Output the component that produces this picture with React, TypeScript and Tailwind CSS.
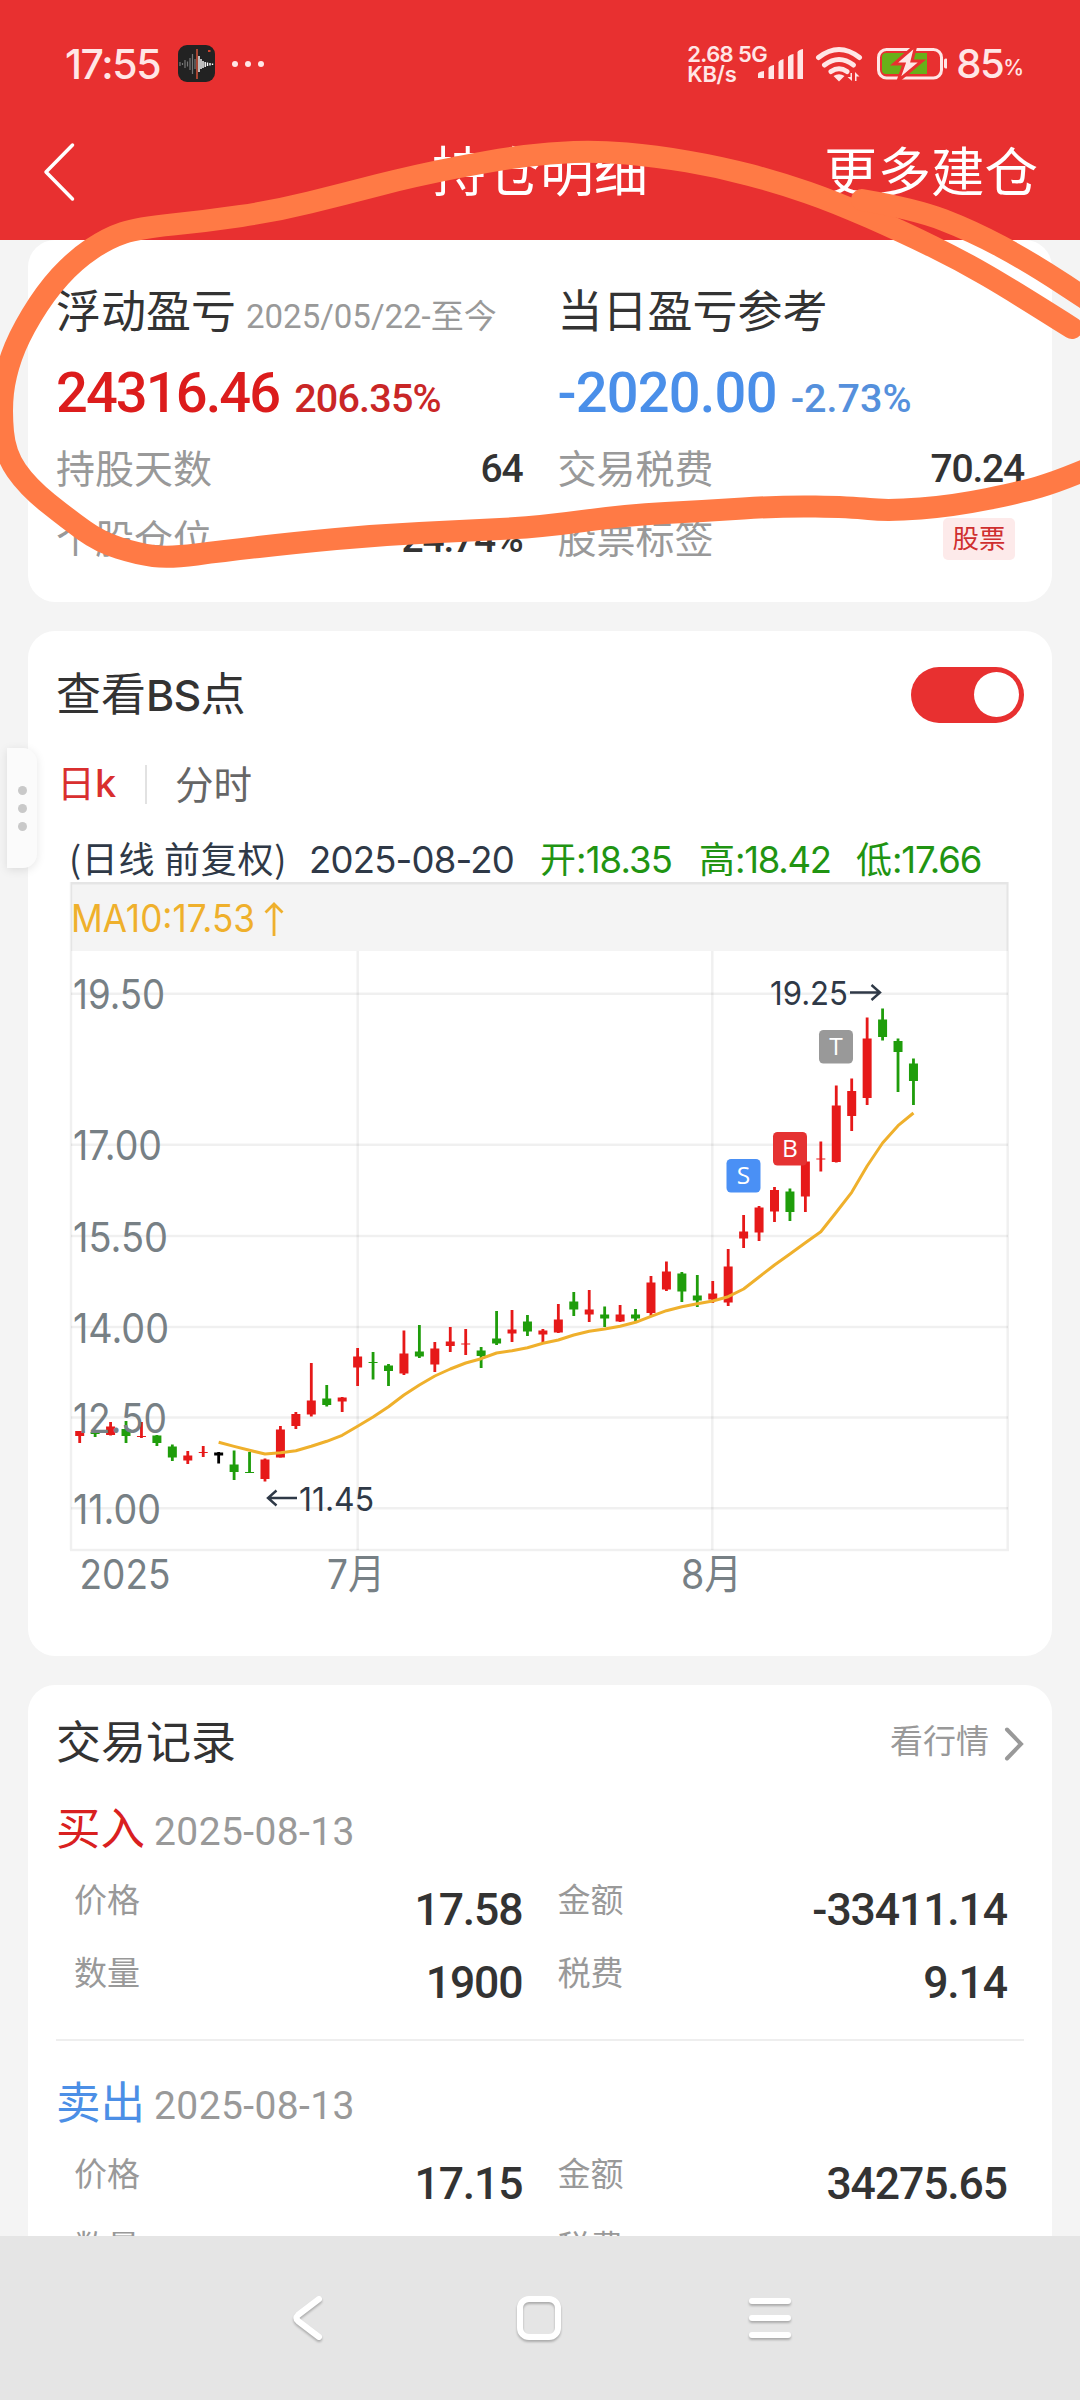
import { ReactNode } from 'react'

type Candle = [high: number, top: number, bottom: number, low: number, color: 'r' | 'g' | 'k']

const candles: Candle[] = [
  [1431, 1431, 1436, 1443, 'r'],
  [1431, 1432, 1434, 1437, 'g'],
  [1422, 1426.5, 1435, 1435.5, 'r'],
  [1421, 1429, 1436, 1443, 'g'],
  [1422, 1436, 1437, 1438, 'r'],
  [1435, 1435.5, 1443, 1446, 'g'],
  [1444.5, 1446.5, 1457.5, 1461, 'g'],
  [1451, 1455.5, 1460.5, 1464, 'r'],
  [1446, 1452, 1453, 1457, 'r'],
  [1452, 1452.5, 1455.5, 1463.5, 'k'],
  [1450.5, 1464.5, 1472, 1480, 'g'],
  [1452, 1472, 1473, 1473, 'g'],
  [1458.5, 1459.5, 1479, 1481.5, 'r'],
  [1426, 1429.5, 1457.5, 1457.5, 'r'],
  [1412, 1414, 1426, 1429, 'r'],
  [1363, 1400.5, 1414.5, 1416.5, 'r'],
  [1385, 1398.5, 1405, 1406.5, 'g'],
  [1397, 1397.5, 1401.5, 1412, 'r'],
  [1348, 1356.5, 1367.5, 1386, 'r'],
  [1352, 1362, 1363, 1379.5, 'g'],
  [1364, 1365.5, 1371, 1386, 'g'],
  [1330.5, 1353.5, 1373.5, 1375, 'r'],
  [1325, 1351.5, 1356.5, 1358, 'g'],
  [1342, 1348.5, 1364.5, 1372, 'r'],
  [1327, 1341.5, 1346, 1352, 'r'],
  [1329, 1343.5, 1344.5, 1355, 'r'],
  [1347, 1350.5, 1356, 1368, 'g'],
  [1311, 1338.5, 1343.5, 1345, 'g'],
  [1310, 1329.5, 1333.5, 1342, 'r'],
  [1315, 1321.5, 1331.5, 1336, 'g'],
  [1329, 1330.5, 1334.5, 1342.5, 'r'],
  [1304, 1319.5, 1332.5, 1333, 'r'],
  [1292, 1301.5, 1309.5, 1316, 'g'],
  [1290, 1309.5, 1314.5, 1322, 'r'],
  [1306.5, 1314.5, 1318.5, 1327, 'g'],
  [1305, 1314.5, 1321.5, 1322, 'r'],
  [1309, 1314.5, 1318.5, 1321.5, 'g'],
  [1276, 1282.5, 1313, 1316, 'r'],
  [1261.5, 1271.5, 1289.5, 1291, 'r'],
  [1272, 1273.5, 1291.5, 1302, 'g'],
  [1275, 1295.5, 1300.5, 1307, 'g'],
  [1281, 1293.5, 1299.5, 1303, 'r'],
  [1249, 1266.5, 1302.5, 1306, 'r'],
  [1215, 1231.5, 1238.5, 1248, 'r'],
  [1206, 1207.5, 1232.5, 1241, 'r'],
  [1187, 1190, 1211.5, 1222, 'r'],
  [1188.5, 1191.5, 1212, 1221, 'g'],
  [1160, 1161.5, 1196.5, 1212, 'r'],
  [1141.5, 1158.5, 1159.5, 1171.5, 'r'],
  [1085.5, 1105.5, 1162, 1162.5, 'r'],
  [1078.5, 1091, 1116, 1131, 'r'],
  [1017.5, 1038.5, 1098, 1105, 'r'],
  [1008.5, 1019.5, 1037, 1040.5, 'g'],
  [1038.5, 1041, 1052, 1092, 'g'],
  [1058.5, 1063.5, 1081, 1105, 'g'],
]

const candleFill = { r: '#e61919', g: '#1f9d0b', k: '#000000' }

// MA10 starts at the tenth candle
const ma10 = [
  1442.3, 1446.4, 1450.3, 1454, 1452.7, 1450.7, 1446.3, 1441.3, 1435.3, 1426.3, 1417, 1406.7,
  1395, 1385, 1376, 1369, 1363, 1358.7, 1353, 1350.7, 1347.7, 1343.3, 1340, 1335, 1331.3, 1329,
  1326.3, 1322.3, 1316.3, 1310.7, 1306.7, 1303.7, 1301, 1296.7, 1289, 1277, 1265, 1254, 1242.7,
  1231.7, 1212.3, 1192.3, 1166, 1143, 1125.7, 1113,
]

const yTicks = [
  { label: '19.50', y: 993.7, width: 92 },
  { label: '17.00', y: 1144.7, width: 89 },
  { label: '15.50', y: 1236, width: 95 },
  { label: '14.00', y: 1327, width: 96 },
  { label: '12.50', y: 1417.5, width: 94 },
  { label: '11.00', y: 1508.3, width: 88 },
]

const markers = [
  { label: 'S', x: 726.5, y: 1159, color: '#4a90f5' },
  { label: 'B', x: 773, y: 1132, color: '#e53232' },
  { label: 'T', x: 819, y: 1030, color: '#999999' },
]

const candleX = (i: number) => 79.7 + i * 15.44

const records = [
  {
    side: '买入',
    color: 'text-[#d92020]',
    date: '2025-08-13',
    price: '17.58',
    amount: '-33411.14',
    count: '1900',
    fee: '9.14',
  },
  {
    side: '卖出',
    color: 'text-[#4c8fe6]',
    date: '2025-08-13',
    price: '17.15',
    amount: '34275.65',
    count: '2000',
    fee: '18.85',
  },
]

// Hand-drawn highlight stroke
const loop: number[][] = [
  [1072, 328], [1012, 290], [960, 260], [905, 233], [835, 202], [780, 183], [720, 167], [655, 156],
  [598, 151], [550, 153], [500, 159], [413, 176], [344, 194], [275, 211], [207, 221], [138, 228], [108, 238],
  [75, 260], [45, 293], [18, 338], [5, 375], [1, 410], [5, 454], [28, 487], [68, 519], [100, 542],
  [138, 554], [169, 558], [224, 551], [293, 543], [379, 535], [460, 531], [540, 527], [626, 515], [705, 511],
  [781, 506], [850, 507], [888, 511], [953, 506], [1022, 492], [1056, 482], [1100, 464],
]
const tail: number[][] = [[862, 200], [915, 209], [972, 231], [1030, 262], [1100, 308]]

function smoothPath(pts: number[][]): string {
  let d = `M${pts[0][0]} ${pts[0][1]}`
  for (let i = 1; i < pts.length - 1; i++) {
    const mx = (pts[i][0] + pts[i + 1][0]) / 2
    const my = (pts[i][1] + pts[i + 1][1]) / 2
    d += ` Q${pts[i][0]} ${pts[i][1]} ${mx} ${my}`
  }
  const last = pts[pts.length - 1]
  return `${d} L${last[0]} ${last[1]}`
}

function StatusBar() {
  return (
    <div className="flex h-[104px] items-start justify-between pt-[42px] pr-[57px] pl-[65px] font-['Inter'] text-[#ffe6e6]">
      <div className="flex h-[44px] items-center">
        <span className="w-[113px] text-[41px] leading-[44px] font-medium tracking-[-1.4px]">17:55</span>
        <svg width="38" height="38" viewBox="0 0 38 38">
          <rect width="37" height="37" rx="9" fill="#222222" />
          <path
            d="M2 17v4M4.500 18v2M7 15v8M9.500 16.500v5M12 13v12M14.500 9v20M17 14v10"
            stroke="#777777"
            strokeWidth="1.2"
          />
          <path
            d="M21 11v16M23 14v10M25 16v7M27.200 17v5M29.500 17.500v3.500M32 18v2.500M34.500 18.500v1.500"
            stroke="#ffffff"
            strokeWidth="1.4"
          />
          <path d="M19 4v30" stroke="#e0563c" strokeWidth="1.4" />
          <rect x="30" y="5" width="2.500" height="2" fill="#d0452f" />
        </svg>
        <div className="ml-[16px] flex gap-[7px]">
          <i className="size-[6px] rounded-full bg-[#ffe6e6]" />
          <i className="size-[6px] rounded-full bg-[#ffe6e6]" />
          <i className="size-[6px] rounded-full bg-[#ffe6e6]" />
        </div>
      </div>
      <div className="flex h-[44px] items-center">
        <div className="w-[70px] text-[22px] leading-[20px] font-semibold whitespace-nowrap">
          <div className="tracking-[-0.6px]">2.68 5G</div>
          <div className="tracking-[-0.3px]">KB/s</div>
        </div>
        <svg width="190" height="44" viewBox="758 42 190 44" fill="#ffe6e6">
          <path d="M759 78v-4q0-2 6-3v7zM769.500 79v-11q1-2 5.500-3v14zM779.500 79v-17q1-2 5-3v20zM789 79v-22q1-2 5.500-3v25zM798.500 79v-27q1-2 5.500-3v30z" />
          <g fill="none" stroke="#ffe6e6" strokeWidth="5" strokeLinecap="round">
            <path d="M819.500 57.500Q840 41.500 860.500 57.500" />
            <path d="M825.500 65Q840 54 854.500 65" />
            <path d="M832 71.500Q840 66 848 71.500" />
          </g>
          <path d="M834.500 76q5.500-3.500 11 0l-5.500 5.500z" />
          <path d="M853 73v8l-4.500-4h3v-4zM856 81v-9l4.500 4.500h-3v4.500z" />
          <rect x="879.500" y="49.500" width="63" height="28.500" rx="8" fill="none" stroke="#ffe6e6" strokeWidth="3" />
          <path d="M887 53h41v21h-41q-4 0-4-4v-13q0-4 4-4z" fill="#68b019" />
          <path d="M917 45l-22 19h10l-6 17 24-20h-10z" fill="#ffe6e6" stroke="#e83030" strokeWidth="3" />
          <rect x="945" y="58.500" width="3.500" height="10" rx="1.700" />
        </svg>
        <span className="ml-[9px] text-[40px] leading-[44px] font-medium tracking-[-1.500px]">85</span>
        <span className="mt-[7px] text-[21px] leading-[24px] font-medium tracking-[-1px]">%</span>
      </div>
    </div>
  )
}

function Card({ className, children }: { className: string; children: ReactNode }) {
  return (
    <section className={`mx-[28px] shrink-0 rounded-[27px] bg-white px-[28px] ${className}`}>{children}</section>
  )
}

function Stat({ label, children }: { label: string; children: ReactNode }) {
  return (
    <div className="flex h-[70px] items-center justify-between">
      <span className="-mt-[6px] text-[39px] leading-[60px] text-[#999999]">{label}</span>
      {children}
    </div>
  )
}

const statValue = "font-['Roboto'] text-[39px] leading-[60px] font-medium tracking-[-1.2px] text-[#333333]"

function Cell({ label, value, className = '' }: { label: string; value: string; className?: string }) {
  return (
    <div className={`flex h-[73px] items-center justify-between ${className}`}>
      <span className="-mt-[4px] text-[33px] leading-[50px] text-[#999999]">{label}</span>
      <span className="mt-[20px] font-['Roboto'] text-[44.5px] leading-[54px] font-medium tracking-[-1.1px] text-[#333333]">
        {value}
      </span>
    </div>
  )
}

function KLineChart() {
  return (
    <svg width="968" height="730" viewBox="56 882 968 730" className="block">
      <rect x="71" y="882" width="937" height="69" fill="#f4f4f4" />
      <g stroke="#000000" strokeOpacity="0.06" strokeWidth="2.500" fill="none">
        <path d="M70 883.200H1009M71 882V1550M1007.700 882V1550M70 1550H1009" />
        <path d="M357.700 951V1550M712.300 951V1550" />
        {yTicks.map((t) => (
          <path key={t.label} d={`M71 ${t.y}H1008`} />
        ))}
      </g>

      {candles.map(([high, top, bottom, low, color], i) => (
        <g key={i} fill={candleFill[color]}>
          <rect x={candleX(i) - 1.4} y={high} width="2.800" height={low - high} />
          <rect x={candleX(i) - 4.5} y={top} width="9" height={bottom - top} />
        </g>
      ))}
      <polyline
        points={ma10.map((y, i) => `${candleX(i + 9)},${y}`).join(' ')}
        fill="none"
        stroke="#efb02c"
        strokeWidth="3"
        strokeLinejoin="round"
      />

      <g fill="#778085" fontFamily="Inter, 'Noto Sans CJK SC', sans-serif" fontSize="41">
        {yTicks.map((t) => (
          <text key={t.label} x="73" y={t.y + 15.5} textLength={t.width} lengthAdjust="spacingAndGlyphs">
            {t.label}
          </text>
        ))}
        <text x="79.500" y="1589" textLength="91" lengthAdjust="spacingAndGlyphs">2025</text>
        <text x="327" y="1589" textLength="58" lengthAdjust="spacingAndGlyphs">7月</text>
        <text x="681" y="1589" textLength="61" lengthAdjust="spacingAndGlyphs">8月</text>
      </g>

      <g fontFamily="Inter, sans-serif">
        <text x="71" y="932" fontSize="37.500" fill="#efb02c" textLength="184" lengthAdjust="spacingAndGlyphs">
          MA10:17.53
        </text>
        <text x="770" y="1005" fontSize="32.500" fill="#2f3947" textLength="78" lengthAdjust="spacingAndGlyphs">
          19.25
        </text>
        <text x="299" y="1511" fontSize="32.500" fill="#2f3947" textLength="75" lengthAdjust="spacingAndGlyphs">
          11.45
        </text>
      </g>
      <path d="M274 936V904M265.500 912.500L274 904L282.500 912.500" fill="none" stroke="#efb02c" strokeWidth="2.800" />
      <g fill="none" stroke="#2f3947" strokeWidth="2.400">
        <path d="M850 992.500H880M871.500 985L880 992.500L871.500 1000" />
        <path d="M297 1498H268M276.500 1490.500L268 1498L276.500 1505.500" />
      </g>

      {markers.map((m) => (
        <g key={m.label}>
          <rect x={m.x} y={m.y} width="34" height="33.500" rx="4.500" fill={m.color} />
          <text
            x={m.x + 17}
            y={m.y + 25}
            textAnchor="middle"
            fontFamily="'Open Sans', sans-serif"
            fontSize="24.500"
            fill="#ffffff"
          >
            {m.label}
          </text>
        </g>
      ))}
    </svg>
  )
}

export default function App() {
  return (
    <div className="relative flex h-[2400px] w-[1080px] flex-col overflow-hidden bg-[#f4f4f4] font-['Noto_Sans_CJK_SC',sans-serif]">
      {/* Header */}
      <header className="h-[240px] shrink-0 bg-[#e83030] text-white">
        <StatusBar />
        <div className="grid h-[136px] grid-cols-3 items-center pr-[42px] pl-[42px]">
          <svg width="34" height="60" viewBox="0 0 34 60" fill="none" stroke="#ffffff" strokeWidth="3.500">
            <path d="M30.500 3L4 30L30.500 57" strokeLinecap="round" strokeLinejoin="round" />
          </svg>
          <h1 className="-mt-[6px] text-center text-[54px] leading-[80px] whitespace-nowrap">持仓明细</h1>
          <span className="-mt-[6px] text-right text-[53.5px] leading-[80px] whitespace-nowrap">更多建仓</span>
        </div>
      </header>

      <main className="flex min-h-0 flex-1 flex-col overflow-hidden">
        {/* Summary */}
        <Card className="h-[362px] pt-[30px]">
          <div className="grid grid-cols-2 gap-x-[35px]">
            <div>
              <div className="flex h-[82px] items-baseline whitespace-nowrap">
                <span className="text-[45px] leading-[78px] text-[#333333]">浮动盈亏</span>
                <span className="ml-[10px] font-['Roboto','Noto_Sans_CJK_SC'] text-[33px] text-[#999999]">
                  2025/05/22-至今
                </span>
              </div>
              <div className="flex h-[82px] items-baseline font-['Roboto'] font-medium text-[#dc1c1c]">
                <span className="text-[56px] leading-[83px] tracking-[-1.9px]">24316.46</span>
                <span className="ml-[15px] text-[39.5px] tracking-[-0.8px] text-[#c92626]">206.35%</span>
              </div>
              <Stat label="持股天数">
                <span className={statValue}>64</span>
              </Stat>
              <Stat label="个股仓位">
                <span className={statValue}>24.74%</span>
              </Stat>
            </div>
            <div>
              <div className="flex h-[82px] items-baseline">
                <span className="text-[45px] leading-[78px] text-[#333333]">当日盈亏参考</span>
              </div>
              <div className="flex h-[82px] items-baseline font-['Roboto'] font-medium text-[#4a8fe9]">
                <span className="text-[56px] leading-[83px] tracking-[-0.8px]">-2020.00</span>
                <span className="ml-[14px] text-[39.5px] text-[#5590dc]">-2.73%</span>
              </div>
              <Stat label="交易税费">
                <span className={statValue}>70.24</span>
              </Stat>
              <Stat label="股票标签">
                <span className="mr-[9px] h-[42px] w-[72px] rounded-[5px] bg-[#fdeaea] text-center text-[26.5px] leading-[37px] text-[#cf2f2f]">
                  股票
                </span>
              </Stat>
            </div>
          </div>
        </Card>

        {/* K-line */}
        <Card className="mt-[29px] h-[1025px] pt-[24px]">
          <div className="flex h-[79px] items-center justify-between">
            <h2 className="-mt-[3px] text-[45px] leading-[70px] text-[#333333]">
              查看<span className="font-['Inter'] text-[43px] font-medium tracking-[-0.8px]">BS</span>点
            </h2>
            <div className="flex h-[56px] w-[113px] items-center justify-end rounded-full bg-[#e83030] pr-[5px]">
              <div className="size-[45px] rounded-full bg-white" />
            </div>
          </div>
          <div className="flex h-[100px] items-center text-[38px] leading-[60px]">
            <span className="-mt-[5px] w-[89px] pl-px text-[#d92f2f]">
              日<span className="font-['Inter'] font-medium">k</span>
            </span>
            <i className="h-[39px] w-[2px] bg-[#e2e2e2]" />
            <span className="-mt-[5px] ml-[28px] text-[38.5px] text-[#666666]">分时</span>
          </div>
          <div className="ml-[13px] flex h-[48px] items-baseline text-[36px] leading-[46px] whitespace-nowrap text-[#2f3947]">
            <span className="w-[240px] tracking-[0.7px]">(日线 前复权)</span>
            <span className="w-[231px] font-['Inter'] text-[36.5px] tracking-[-0.8px]">2025-08-20</span>
            <span className="w-[159px] text-[#219412]">
              开<span className="font-['Inter'] text-[36.5px] tracking-[-0.9px]">:18.35</span>
            </span>
            <span className="w-[157px] text-[#219412]">
              高<span className="font-['Inter'] text-[36.5px] tracking-[-1.3px]">:18.42</span>
            </span>
            <span className="text-[#219412]">
              低<span className="font-['Inter'] text-[36.5px] tracking-[-1.2px]">:17.66</span>
            </span>
          </div>
          <KLineChart />
        </Card>

        {/* Trade records */}
        <Card className="mt-[29px] h-[700px] pt-[32px]">
          <div className="flex h-[50px] items-center justify-between">
            <h2 className="-mt-[5px] text-[45px] leading-[50px] text-[#333333]">交易记录</h2>
            <div className="flex items-center text-[33px] leading-[50px] text-[#999999]">
              <span className="-mt-[6px]">看行情</span>
              <svg width="20" height="36" viewBox="0 0 20 36" fill="none" className="mt-[3px] ml-[15px]">
                <path d="M3 3.500L17 18L3 32.500" stroke="#999999" strokeWidth="4" strokeLinecap="round" />
              </svg>
            </div>
          </div>
          {records.map((r) => (
            <div key={r.side} className="h-[274px] border-b-2 border-[#eeeeee] pt-[30px]">
              <div className="flex h-[66px] items-baseline">
                <span className={`text-[44.5px] leading-[58px] ${r.color}`}>{r.side}</span>
                <span className="ml-[9px] font-['Roboto'] text-[39px] tracking-[0.4px] text-[#999999]">{r.date}</span>
              </div>
              <div className="grid grid-cols-2 gap-x-[35px]">
                <Cell label="价格" value={r.price} className="pl-[18px]" />
                <Cell label="金额" value={r.amount} className="pr-[17px]" />
                <Cell label="数量" value={r.count} className="pl-[18px]" />
                <Cell label="税费" value={r.fee} className="pr-[17px]" />
              </div>
            </div>
          ))}
        </Card>
      </main>

      {/* System navigation */}
      <nav className="flex h-[164px] shrink-0 items-center bg-[#e5e5e5] pl-[288px]">
        <svg width="36" height="50" viewBox="0 0 36 50" fill="none" stroke="#ffffff" strokeWidth="6" className="drop-shadow-[0_2px_1px_rgba(0,0,0,0.25)]">
          <path d="M31 6L10 22Q7 25 10 28L31 44" strokeLinecap="round" strokeLinejoin="round" />
        </svg>
        <svg width="50" height="50" viewBox="0 0 50 50" fill="none" stroke="#ffffff" strokeWidth="6" className="ml-[190px] drop-shadow-[0_2px_1px_rgba(0,0,0,0.25)]">
          <rect x="6" y="6" width="38" height="38" rx="9" />
        </svg>
        <svg width="50" height="50" viewBox="0 0 50 50" fill="none" stroke="#ffffff" strokeWidth="6" className="ml-[181px] drop-shadow-[0_2px_1px_rgba(0,0,0,0.25)]">
          <path d="M7 8H43M7 25H43M7 42H43" strokeLinecap="round" />
        </svg>
      </nav>

      {/* Floating side handle */}
      <div className="absolute top-[748px] left-[7px] flex h-[120px] w-[30px] flex-col items-center justify-center gap-[9px] rounded-r-[14px] bg-[#fbfbfb] shadow-[0_2px_10px_rgba(0,0,0,0.1)]">
        <i className="size-[9px] rounded-full bg-[#c9c9c9]" />
        <i className="size-[9px] rounded-full bg-[#c9c9c9]" />
        <i className="size-[9px] rounded-full bg-[#c9c9c9]" />
      </div>

      <svg
        width="1080"
        height="640"
        viewBox="0 0 1080 640"
        fill="none"
        stroke="#ff7a45"
        strokeWidth="22"
        strokeLinecap="round"
        strokeLinejoin="round"
        className="pointer-events-none absolute top-0 left-0"
      >
        <path d={smoothPath(loop)} />
        <path d={smoothPath(tail)} />
      </svg>
    </div>
  )
}
